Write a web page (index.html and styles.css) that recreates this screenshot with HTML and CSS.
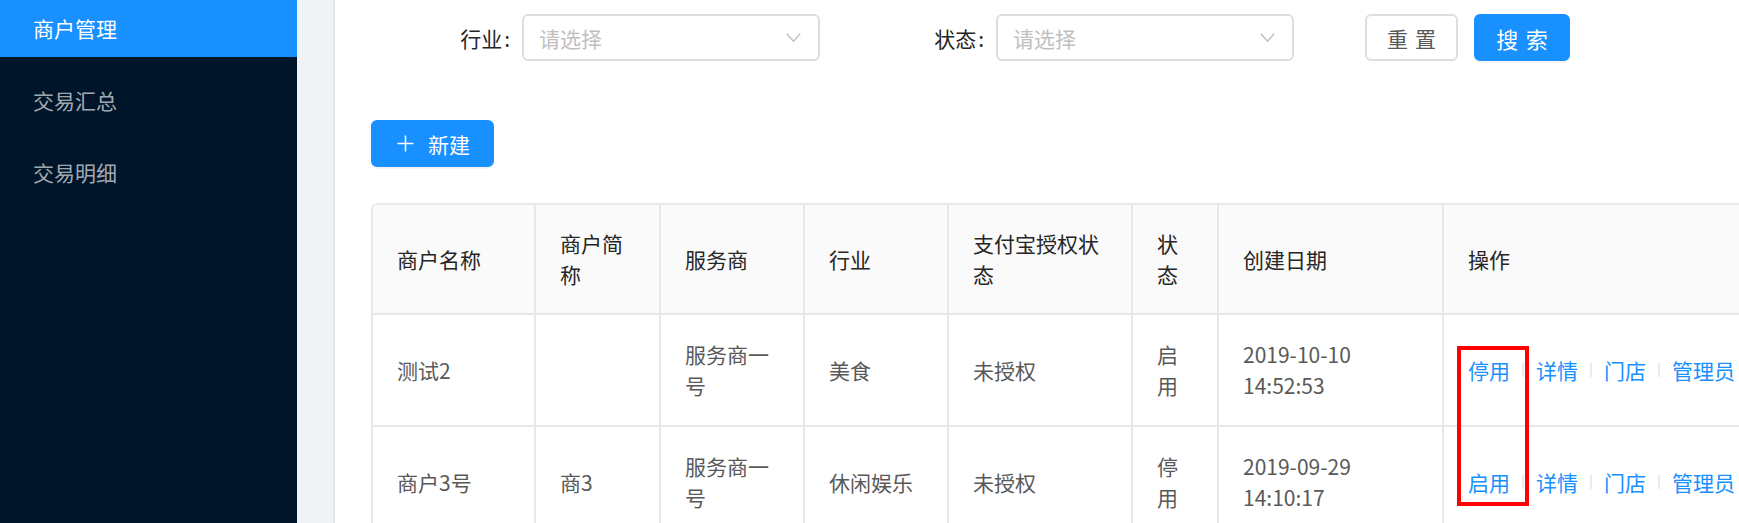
FILE: index.html
```html
<!DOCTYPE html>
<html lang="zh-CN">
<head>
<meta charset="utf-8">
<title>商户管理</title>
<link rel="stylesheet" href="styles.css">
</head>
<body>
<div class="layout">
  <aside class="sider">
    <ul class="menu">
      <li class="menu-item active">商户管理</li>
      <li class="menu-item">交易汇总</li>
      <li class="menu-item">交易明细</li>
    </ul>
  </aside>
  <div class="gutter"></div>
  <main class="content">
    <form class="filters">
      <div class="form-item">
        <label class="label">行业<span class="colon">:</span></label>
        <div class="select">
          <span class="placeholder">请选择</span>
          <svg class="arrow" width="15" height="11" viewBox="0 0 15 11"><polyline points="0.8,1.8 7.5,9.2 14.2,1.8" fill="none" stroke="#bfbfbf" stroke-width="1.4"/></svg>
        </div>
      </div>
      <div class="form-item">
        <label class="label">状态<span class="colon">:</span></label>
        <div class="select">
          <span class="placeholder">请选择</span>
          <svg class="arrow" width="15" height="11" viewBox="0 0 15 11"><polyline points="0.8,1.8 7.5,9.2 14.2,1.8" fill="none" stroke="#bfbfbf" stroke-width="1.4"/></svg>
        </div>
      </div>
      <div class="form-actions">
        <button type="button" class="btn btn-reset"><span class="two-chars">重置</span></button>
        <button type="button" class="btn btn-primary btn-search"><span class="two-chars">搜索</span></button>
      </div>
    </form>

    <div class="toolbar">
      <button type="button" class="btn btn-primary btn-new">
        <svg class="plus" width="17" height="17" viewBox="0 0 17 17"><path d="M8.5 0.5v16M0.5 8.5h16" stroke="#fff" stroke-width="1.5" fill="none"/></svg>
        <span>新建</span>
      </button>
    </div>

    <div class="table">
      <div class="th">商户名称</div>
      <div class="th">商户简称</div>
      <div class="th">服务商</div>
      <div class="th">行业</div>
      <div class="th">支付宝授权状态</div>
      <div class="th">状态</div>
      <div class="th">创建日期</div>
      <div class="th">操作</div>

      <div class="td">测试2</div>
      <div class="td"></div>
      <div class="td">服务商一号</div>
      <div class="td">美食</div>
      <div class="td">未授权</div>
      <div class="td">启用</div>
      <div class="td">2019-10-10 14:52:53</div>
      <div class="td">
        <div class="ops">
          <a class="link">停用</a><i class="divider"></i><a class="link">详情</a><i class="divider"></i><a class="link">门店</a><i class="divider"></i><a class="link">管理员</a>
        </div>
      </div>

      <div class="td">商户3号</div>
      <div class="td">商3</div>
      <div class="td">服务商一号</div>
      <div class="td">休闲娱乐</div>
      <div class="td">未授权</div>
      <div class="td">停用</div>
      <div class="td">2019-09-29 14:10:17</div>
      <div class="td">
        <div class="ops">
          <a class="link">启用</a><i class="divider"></i><a class="link">详情</a><i class="divider"></i><a class="link">门店</a><i class="divider"></i><a class="link">管理员</a>
        </div>
      </div>
    </div>
  </main>
</div>
<div class="highlight"></div>
</body>
</html>
```

FILE: styles.css
```css
* {
  box-sizing: border-box;
}

html, body {
  margin: 0;
  padding: 0;
  height: 100%;
  overflow: hidden;
}

body {
  font-family: "Noto Sans CJK SC", "Noto Sans", sans-serif;
  font-size: 21px;
  color: #595959;
  background: #ffffff;
}

.layout {
  display: flex;
  height: 100%;
}

/* ---------- sidebar ---------- */
.sider {
  width: 297px;
  flex: none;
  background: #001529;
}

.menu {
  list-style: none;
  margin: 0;
  padding: 0;
}

.menu-item {
  height: 57px;
  line-height: 57px;
  padding-left: 33px;
  color: rgba(255, 255, 255, 0.65);
  font-size: 21px;
}

.menu-item + .menu-item {
  margin-top: 15px;
}

.menu-item.active {
  background: #1890ff;
  color: #ffffff;
}

.gutter {
  width: 38px;
  flex: none;
  background: #f0f2f5;
  border-right: 2px solid #e4e6ea;
}

/* ---------- content ---------- */
.content {
  flex: 1;
  min-width: 0;
  overflow: hidden;
  background: #ffffff;
}

.filters {
  display: flex;
  align-items: center;
  margin: 0;
  padding: 14px 0 0 11px;
}

.form-item {
  display: flex;
  align-items: center;
  width: 474px;
}

.label {
  width: 176px;
  padding-right: 12px;
  text-align: right;
  color: #262626;
  white-space: nowrap;
}

.colon {
  margin-left: 2px;
}

.select {
  width: 298px;
  height: 47px;
  border: 2px solid #dedede;
  border-radius: 6px;
  display: flex;
  align-items: center;
  justify-content: space-between;
  padding: 0 17px 0 15px;
  background: #fff;
}

.placeholder {
  color: #bfbfbf;
}

.arrow {
  display: block;
}

.form-actions {
  display: flex;
  gap: 16px;
  margin-left: 71px;
}

.btn {
  height: 47px;
  border: 2px solid #dedede;
  border-radius: 6px;
  background: #fff;
  color: #595959;
  font-family: inherit;
  font-size: 21px;
  padding: 0;
  display: flex;
  align-items: center;
  justify-content: center;
  cursor: pointer;
}

.two-chars {
  letter-spacing: 0.34em;
  margin-right: -0.34em;
}

.btn-reset {
  width: 93px;
}

.btn-primary {
  background: #1890ff;
  border-color: #1890ff;
  color: #fff;
  box-shadow: 0 2px 0 rgba(0, 0, 0, 0.045);
}

.btn-search {
  width: 96px;
  font-size: 22px;
}

.toolbar {
  padding: 59px 0 0 36px;
}

.btn-new {
  width: 123px;
  justify-content: flex-start;
  padding: 0 0 0 24px;
  gap: 14px;
}

.plus {
  display: block;
}

/* ---------- table ---------- */
.table {
  margin: 36px 0 0 36px;
  display: grid;
  grid-template-columns: 163px 125px 144px 144px 184px 86px 225px 360px;
  width: max-content;
  border-top: 2px solid #e8e8e8;
  border-left: 2px solid #e8e8e8;
  border-top-left-radius: 6px;
  overflow: hidden;
}

.th,
.td {
  display: flex;
  align-items: center;
  border-right: 2px solid #e8e8e8;
  border-bottom: 2px solid #e8e8e8;
  line-height: 31px;
  padding: 24px 24px;
}

.th {
  background: #fafafa;
  color: #262626;
  padding-top: 23px;
  padding-bottom: 23px;
}

.td {
  color: #595959;
  min-height: 112px;
}

.ops {
  display: flex;
  align-items: center;
  white-space: nowrap;
}

.link {
  color: #1890ff;
  text-decoration: none;
}

.divider {
  display: inline-block;
  width: 2px;
  height: 14px;
  background: #ebebeb;
  margin: 0 12px;
}

/* annotation overlay */
.highlight {
  position: absolute;
  left: 1457px;
  top: 346px;
  width: 72px;
  height: 160px;
  border: 4px solid #ff0000;
  pointer-events: none;
}
```
